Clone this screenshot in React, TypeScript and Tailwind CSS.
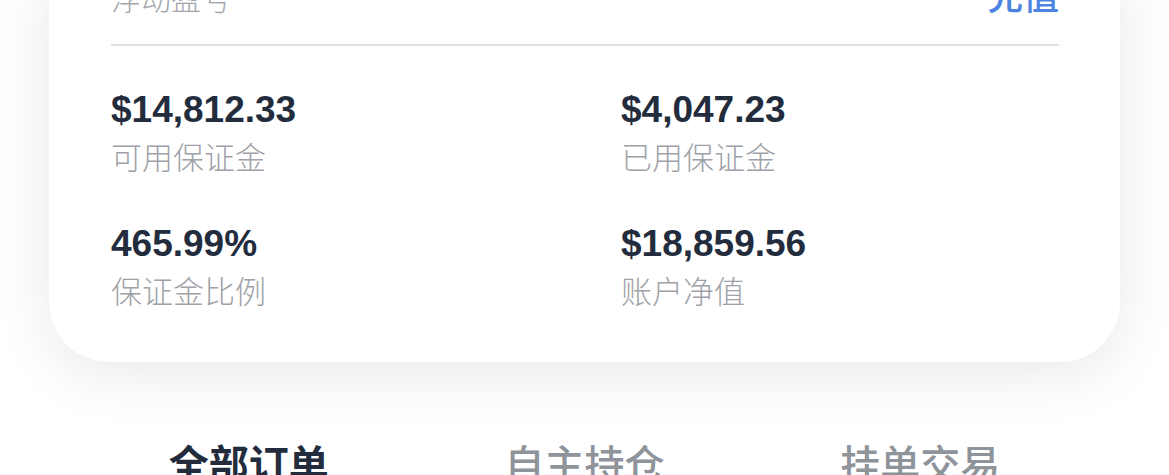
import React from "react";

const cjk = { fontFamily: '"Noto Sans CJK SC", "Noto Sans", sans-serif' };
const num = { fontFamily: '"Liberation Sans", "Noto Sans CJK SC", sans-serif' };

function Stat({ value, label }: { value: string; label: string }) {
  return (
    <div className="flex flex-col">
      <div className="text-[37px] leading-none font-bold text-[#232c3d]" style={num}>
        {value}
      </div>
      <div className="mt-[12px] text-[31px] leading-none font-light text-[#9ea2a8]" style={cjk}>
        {label}
      </div>
    </div>
  );
}

export default function App() {
  return (
    <div className="w-[1169px] h-[475px] overflow-hidden bg-white">
      <div className="mx-[49px] -mt-[68px] rounded-[60px] bg-white shadow-[0_12px_60px_rgba(0,0,0,0.09)] pl-[62px] pr-[61px] pt-[44px] pb-[57px]">
        <div className="flex items-end justify-between">
          <div className="text-[30px] leading-none font-light text-[#a3a6ab]" style={cjk}>
            浮动盈亏
          </div>
          <div className="text-[36px] leading-none font-medium text-[#4d84e2]" style={cjk}>
            充值
          </div>
        </div>
        <div className="mt-[32px] h-[2px] bg-[#e2e2e4]" />
        <div className="mt-[45px] grid grid-cols-[510px_1fr] gap-y-[54px]">
          <Stat value="$14,812.33" label="可用保证金" />
          <Stat value="$4,047.23" label="已用保证金" />
          <Stat value="465.99%" label="保证金比例" />
          <Stat value="$18,859.56" label="账户净值" />
        </div>
      </div>
      <div className="mx-[81px] mt-[80px] grid grid-cols-3 text-[40px] leading-none" style={cjk}>
        <div className="text-center font-bold text-[#232c3d]">全部订单</div>
        <div className="text-center font-medium text-[#8f939a]">自主持仓</div>
        <div className="text-center font-medium text-[#8f939a]">挂单交易</div>
      </div>
    </div>
  );
}
